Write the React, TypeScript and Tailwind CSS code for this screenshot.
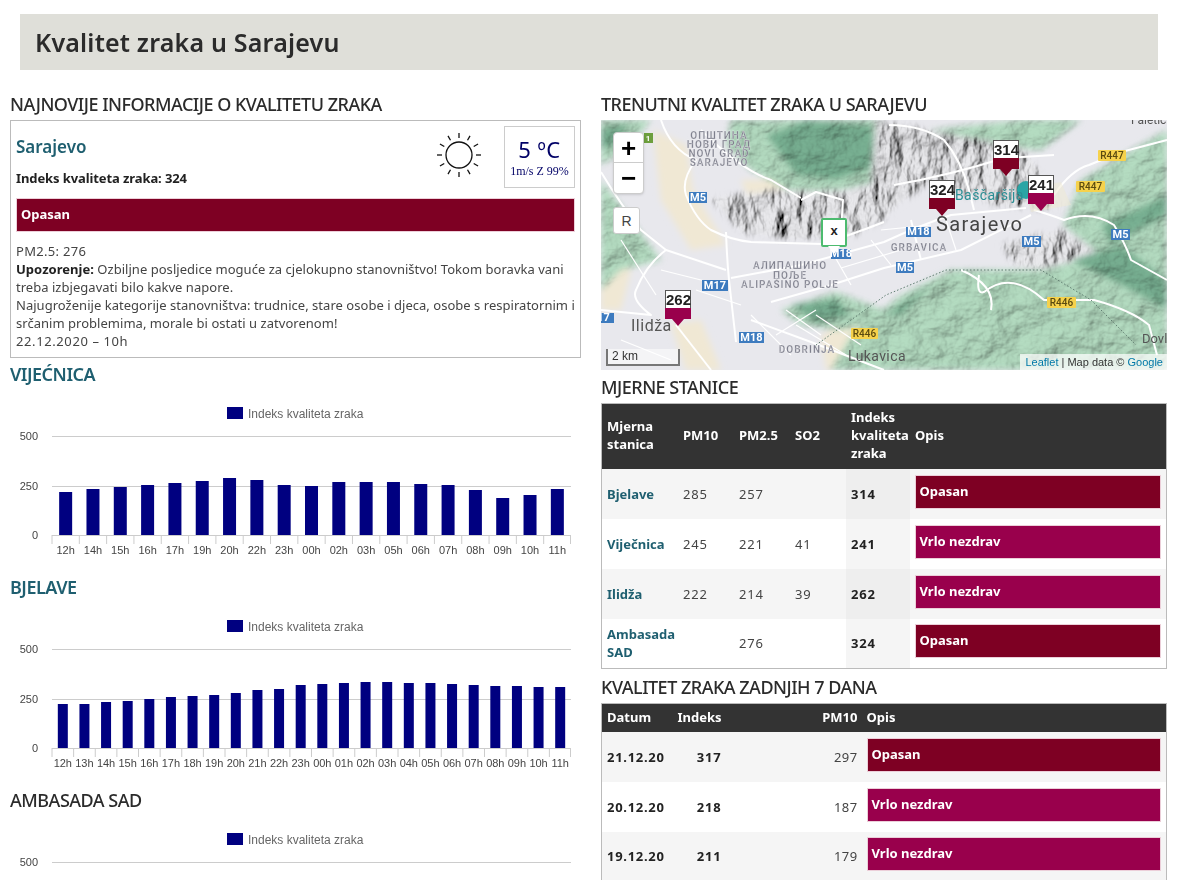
const hoursA = ['12h', '14h', '15h', '16h', '17h', '19h', '20h', '22h', '23h', '00h', '02h', '03h', '05h', '06h', '07h', '08h', '09h', '10h', '11h'];
const barsA = [43, 46, 48, 50, 52, 54, 57, 55, 50, 49, 53, 53, 53, 51, 50, 45, 37, 40, 46];
const hoursB = ['12h', '13h', '14h', '15h', '16h', '17h', '18h', '19h', '20h', '21h', '22h', '23h', '00h', '01h', '02h', '03h', '04h', '05h', '06h', '07h', '08h', '09h', '10h', '11h'];
const barsB = [44, 44, 46, 47, 49, 51, 52, 53, 55, 58, 59, 63, 64, 65, 66, 66, 65, 65, 64, 63, 62, 62, 61, 61];

const DARK = 'bg-[#7e0023]';
const PURPLE = 'bg-[#99004c]';

const Chart = ({ hours = [], bars = [] }: { hours?: string[]; bars?: number[] }) => {
  const left = 42;
  const right = 561;
  const step = hours.length ? (right - left) / hours.length : 0;
  const barW = hours.length > 20 ? 10 : 13;
  return (
    <svg width="571" height="183" viewBox="0 0 571 183" className="block font-['Liberation_Sans',sans-serif]">
      <rect x="217" y="17" width="16" height="12" fill="#000080" />
      <text x="238" y="28" fontSize="12" fill="#666">Indeks kvaliteta zraka</text>
      {[46, 96].map((y) => (
        <line key={y} x1={left} x2={right} y1={y + 0.5} y2={y + 0.5} stroke="#ccc" />
      ))}
      {[['500', 46], ['250', 96], ['0', 145]].map(([label, y]) => (
        <text key={label} x="28" y={Number(y) + 4} fontSize="11" fill="#444" textAnchor="end">{label}</text>
      ))}
      {bars.map((h, i) => (
        <rect key={i} x={left + step * (i + 0.5) - barW / 2} y={145 - h} width={barW} height={h} fill="#000080" />
      ))}
      {hours.length > 0 && <line x1={left} x2={right} y1="145.5" y2="145.5" stroke="#ccc" />}
      {hours.map((label, i) => (
        <g key={i}>
          <line x1={left + step * i} x2={left + step * i} y1="145" y2="154" stroke="#ccc" />
          <text x={left + step * (i + 0.5)} y="164" fontSize="11" fill="#444" textAnchor="middle">{label}</text>
        </g>
      ))}
      {hours.length > 0 && <line x1={right - 0.5} x2={right - 0.5} y1="145" y2="154" stroke="#ccc" />}
    </svg>
  );
};

const Sun = () => (
  <svg width="44" height="44" viewBox="0 0 44 44" fill="none" stroke="#111" strokeWidth="1.3">
    <circle cx="22" cy="22" r="13" />
    {[0, 30, 60, 90, 120, 150, 180, 210, 240, 270, 300, 330].map((a) => (
      <line key={a} x1="22" y1="0" x2="22" y2="5" transform={`rotate(${a} 22 22)`} />
    ))}
  </svg>
);

const hills = [
  'M130,0 L283,0 L283,60 L240,70 L190,72 L150,50 L125,25 Z',
  'M0,60 L30,100 L60,140 L20,150 L0,170 Z',
  'M0,0 L50,0 L30,25 L0,45 Z',
  'M180,190 L235,172 L283,190 L300,198 L240,210 L200,205 Z',
  'M566,10 L480,60 L462,105 L500,135 L440,150 L350,150 L300,175 L250,215 L230,250 L566,250 Z',
  'M283,20 L330,10 L420,0 L480,0 L440,30 L380,25 L330,35 Z',
];
const deepGreen = [
  'M165,15 L205,0 L270,5 L280,45 L235,60 L195,55 Z',
  'M190,185 L235,178 L250,195 L215,203 Z',
  'M500,105 L566,75 L566,95 L510,125 Z',
  'M470,140 L520,125 L566,160 L566,190 L520,165 Z',
  'M283,195 L330,165 L300,195 Z',
  'M0,8 L28,4 L14,25 L0,30 Z',
];
const rocks = [
  'M110,78 L180,70 L250,72 L283,62 L290,95 L250,116 L190,118 L140,112 Z',
  'M275,0 L420,28 L445,60 L460,90 L395,85 L330,62 L285,92 L270,60 Z',
  'M400,125 L460,110 L490,130 L440,150 L415,145 Z',
];
const tan = [
  'M52,10 L85,25 L92,70 L125,125 L90,130 L60,80 Z',
  'M140,60 L170,60 L200,80 L150,85 Z',
  'M70,205 L100,200 L120,250 L85,250 Z',
  'M220,215 L260,195 L290,235 L250,250 L225,250 Z',
  'M0,130 L30,150 L20,190 L0,190 Z',
];
const roads = [
  'M60,0 Q70,30 95,40 Q80,60 85,75 Q95,100 110,110 Q130,120 150,122 L220,124 Q250,115 283,102',
  'M125,112 Q126,140 128,160 L135,222',
  'M130,158 L200,145 L283,122 Q320,105 350,95 L425,88',
  'M170,182 L230,165 L283,148 L360,130 L430,95',
  'M0,190 L50,195 Q30,180 35,170 Q45,145 65,130 L125,150',
  'M0,52 Q20,85 40,110 L65,130',
  'M75,205 L110,250',
  'M150,200 L210,222 L283,250',
  'M433,90 Q450,95 463,100 Q490,90 513,105 Q525,125 530,140 L566,160',
  'M453,75 Q470,50 488,45 L520,32 L566,20',
  'M378,155 Q375,175 383,172 Q410,150 443,180 L493,180 Q530,190 548,205 L556,235',
  'M288,5 Q320,5 343,20 Q360,40 368,70 L373,90',
  'M293,65 Q350,55 403,38 L453,35',
  'M200,80 L215,72 L242,80 L240,110',
  'M100,10 Q140,50 170,60 L200,78',
  'M310,100 L320,140',
  'M360,150 Q395,165 390,190',
];
const streets = [
  'M230,130 L250,165 M270,120 L290,145 M185,190 L220,215 M150,195 L190,235 M175,215 L215,190',
  'M195,205 L245,235 M215,195 L260,225 M240,148 L300,130 M60,150 L120,165 M95,170 L140,185',
  'M20,120 L55,175 M280,110 L330,105 M20,220 L70,240 M345,100 L355,130',
];
const blueShields = [
  ['M5', 88, 72, 18, 11], ['M17', 101, 160, 26, 11], ['17', -8, 193, 21, 10], ['M18', 138, 212, 25, 11],
  ['M18', 230, 129, 20, 10], ['M18', 305, 107, 25, 10], ['M5', 295, 142, 18, 11], ['M5', 421, 116, 19, 11], ['M5', 510, 109, 19, 11],
] as const;
const yellowShields = [
  ['R447', 497, 30, 28, 11], ['R447', 475, 61, 29, 11], ['R446', 446, 177, 29, 11], ['R446', 250, 208, 27, 11],
] as const;
const grayLabels = [
  ['ОПШТИНА', 118, 19], ['НОВИ ГРАД', 118, 28], ['NOVI GRAD', 118, 37], ['SARAJEVO', 118, 46],
  ['АЛИПАШИНО', 189, 149], ['ПОЉЕ', 189, 159], ['ALIPAŠINO POLJE', 189, 168], ['GRBAVICA', 318, 131], ['DOBRINJA', 206, 233],
] as const;

const MapArt = () => (
  <svg width="566" height="250" viewBox="0 0 566 250" className="block font-['Roboto',sans-serif]">
    <defs>
      <filter id="soft"><feGaussianBlur stdDeviation="3" /></filter>
      <filter id="crisp"><feGaussianBlur stdDeviation="0.35" /></filter>
      <filter id="relief" x="0" y="0" width="100%" height="100%">
        <feTurbulence type="fractalNoise" baseFrequency="0.03 0.04" numOctaves="5" seed="7" />
        <feDiffuseLighting surfaceScale="6" lightingColor="#ffffff">
          <feDistantLight azimuth="220" elevation="62" />
        </feDiffuseLighting>
      </filter>
      <filter id="ridges" x="0" y="0" width="100%" height="100%">
        <feTurbulence type="fractalNoise" baseFrequency="0.05 0.025" numOctaves="5" seed="11" />
        <feDiffuseLighting surfaceScale="11" lightingColor="#ffffff">
          <feDistantLight azimuth="200" elevation="55" />
        </feDiffuseLighting>
      </filter>
      <mask id="terrain">
        <g fill="#fff" filter="url(#soft)">
          {hills.map((d, i) => <path key={i} d={d} />)}
        </g>
      </mask>
      <mask id="rocky">
        <g fill="#fff" filter="url(#soft)">
          {rocks.map((d, i) => <path key={i} d={d} />)}
        </g>
      </mask>
    </defs>
    <rect width="566" height="250" fill="#e8e8ed" />
    <g filter="url(#soft)">
      {tan.map((d, i) => <path key={i} d={d} fill="#f0e8d4" />)}
      {hills.map((d, i) => <path key={i} d={d} fill="#b4dcc1" />)}
      {deepGreen.map((d, i) => <path key={i} d={d} fill="#78b092" />)}
      {rocks.map((d, i) => <path key={i} d={d} fill="#e9e9ec" />)}
    </g>
    <rect width="566" height="250" filter="url(#relief)" mask="url(#terrain)" className="mix-blend-multiply" />
    <rect width="566" height="250" filter="url(#ridges)" mask="url(#rocky)" className="mix-blend-multiply" />
    <g filter="url(#crisp)" fill="none" stroke="#fff" strokeLinejoin="round">
      <g strokeWidth="2">{roads.map((d, i) => <path key={i} d={d} />)}</g>
      <g strokeWidth="1.2">{streets.map((d, i) => <path key={i} d={d} />)}</g>
    </g>
    <path d="M425,68 L460,62 L470,85 L430,92 Z" fill="#efe9d2" opacity="0.5" />
    <path d="M215,225 L285,175 L345,150 L440,150 L490,180 L535,225" fill="none" stroke="#5f7d70" strokeWidth="1" strokeDasharray="1.5 2" />
    <rect x="43" y="13" width="9" height="10" fill="#6d9f3d" />
    <text x="47" y="21" fontSize="8" fontWeight="700" fill="#fff" textAnchor="middle">1</text>
    {blueShields.map(([t, x, y, w, h], i) => (
      <g key={i}>
        <rect x={x} y={y} width={w} height={h} fill="#3d7bbf" />
        <text x={x + w / 2} y={y + h - 2} fontSize="11" fontWeight="700" fill="#fff" textAnchor="middle">{t}</text>
      </g>
    ))}
    {yellowShields.map(([t, x, y, w, h], i) => (
      <g key={i}>
        <rect x={x} y={y} width={w} height={h} rx="1" fill="#f6d24c" />
        <text x={x + w / 2} y={y + h - 2} fontSize="10" fontWeight="500" fill="#5a4a10" textAnchor="middle">{t}</text>
      </g>
    ))}
    {grayLabels.map(([t, x, y], i) => (
      <text key={i} x={x} y={y} fontSize="10" fontWeight="700" letterSpacing="1" fill="#7d7e8c" stroke="#fff" strokeOpacity="0.5" strokeWidth="0.4" textAnchor="middle">{t}</text>
    ))}
    <circle cx="425" cy="70" r="9" fill="#2aa5a5" />
    <text x="354" y="80" fontSize="14" letterSpacing="0.4" fill="#2b8f95">Baščaršija</text>
    <text x="335" y="111" fontSize="20" letterSpacing="1.4" fill="#444">Sarajevo</text>
    <text x="30" y="211" fontSize="16" letterSpacing="0.5" fill="#555">Ilidža</text>
    <text x="247" y="241" fontSize="14" letterSpacing="0.4" fill="#555">Lukavica</text>
    <text x="541" y="223" fontSize="13" fill="#555">Dovl</text>
    <text x="530" y="4" fontSize="12" fill="#555">Faletići</text>
  </svg>
);

const markers = [
  { value: '314', pos: 'left-[392px] top-[20px]', color: DARK, tip: 'border-t-[#7e0023]' },
  { value: '324', pos: 'left-[328px] top-[60px]', color: DARK, tip: 'border-t-[#7e0023]' },
  { value: '241', pos: 'left-[427px] top-[55px]', color: PURPLE, tip: 'border-t-[#99004c]' },
  { value: '262', pos: 'left-[64px] top-[170px]', color: PURPLE, tip: 'border-t-[#99004c]' },
];

const Marker = ({ value, pos, color, tip }: { value: string; pos: string; color: string; tip: string }) => (
  <div className={`absolute w-[26px] ${pos}`}>
    <div className="h-[18px] bg-white border-t border-x border-[#555] text-center text-[15px] leading-[18px] font-bold text-[#222] font-['Liberation_Sans',sans-serif]">{value}</div>
    <div className={`h-[11px] ${color}`} />
    <div className={`mx-auto w-0 h-0 border-x-[6px] border-x-transparent border-t-[7px] ${tip}`} />
  </div>
);

const SarajevoMap = () => (
  <div className="relative w-[566px] h-[250px] overflow-hidden">
    <MapArt />
    <div className="absolute left-[12px] top-[12px] w-[31px] bg-white rounded-[4px] border border-[#ccc] shadow-sm text-black font-['Liberation_Sans',sans-serif]">
      <div className="h-[30px] flex items-center justify-center text-[26px] font-bold leading-none border-b border-[#ccc]">+</div>
      <div className="h-[30px] flex items-center justify-center text-[26px] font-bold leading-none">−</div>
    </div>
    <div className="absolute left-[12px] top-[87px] w-[27px] h-[27px] bg-white rounded-[3px] border border-[#ccc] flex items-center justify-center text-[14px] text-[#444] font-['Liberation_Sans',sans-serif]">R</div>
    {markers.map((m) => <Marker key={m.value} {...m} />)}
    <div className="absolute left-[220px] top-[98px] w-[26px]">
      <div className="h-[29px] bg-white border-2 border-[#4dbb6f] rounded-[2px] text-center text-[13px] leading-[22px] font-bold text-[#222] font-['Liberation_Sans',sans-serif]">x</div>
      <div className="mx-auto -mt-[1px] w-0 h-0 border-x-[6px] border-x-transparent border-t-[8px] border-t-white" />
    </div>
    <div className="absolute left-[5px] bottom-[4px] w-[74px] h-[17px] border-2 border-t-0 border-[#777] bg-white/50 pl-[4px] text-[12px] leading-[15px] text-[#333] font-['Liberation_Sans',sans-serif]">2 km</div>
    <div className="absolute right-0 bottom-0 h-[16px] pl-[5px] pr-[4px] bg-white/70 text-[11px] leading-[16px] text-[#333] font-['Liberation_Sans',sans-serif]">
      <span className="text-[#0078a8]">Leaflet</span> | Map data © <span className="text-[#0078a8]">Google</span>
    </div>
  </div>
);

const Status = ({ text, color }: { text: string; color: string }) => (
  <div className={`h-[34px] border border-[#eccfd9] ${color} pl-[4px] text-[13px] leading-[30px] font-bold text-white`}>{text}</div>
);

const Title = ({ children, teal = false }: { children: string; teal?: boolean }) => (
  <h2 className={`h-[30px] text-[18px] leading-[29px] tracking-[-0.5px] ${teal ? 'font-semibold text-[#1f5f70]' : 'font-medium text-[#2b2b2b]'}`}>{children}</h2>
);

const stations = [
  { name: 'Bjelave', pm10: '285', pm25: '257', so2: '', index: '314', text: 'Opasan', color: DARK },
  { name: 'Viječnica', pm10: '245', pm25: '221', so2: '41', index: '241', text: 'Vrlo nezdrav', color: PURPLE },
  { name: 'Ilidža', pm10: '222', pm25: '214', so2: '39', index: '262', text: 'Vrlo nezdrav', color: PURPLE },
  { name: 'Ambasada SAD', pm10: '', pm25: '276', so2: '', index: '324', text: 'Opasan', color: DARK },
];

const days = [
  { date: '21.12.20', index: '317', pm10: '297', text: 'Opasan', color: DARK },
  { date: '20.12.20', index: '218', pm10: '187', text: 'Vrlo nezdrav', color: PURPLE },
  { date: '19.12.20', index: '211', pm10: '179', text: 'Vrlo nezdrav', color: PURPLE },
];

export default function App() {
  return (
    <div className="w-[1179px] h-[880px] overflow-hidden bg-white text-[13px] leading-[18px] text-[#333] font-['Noto_Sans',sans-serif]">
      <header className="ml-[20px] mr-[21px] mt-[14px] h-[56px] bg-[#dfdfd9] flex items-center pl-[15px]">
        <h1 className="text-[25px] font-semibold tracking-[0.2px] text-[#2b2b2b]">Kvalitet zraka u Sarajevu</h1>
      </header>

      <div className="flex gap-[20px] pl-[10px] mt-[20px]">
        {/* lijeva kolona */}
        <div className="w-[571px] shrink-0">
          <Title>NAJNOVIJE INFORMACIJE O KVALITETU ZRAKA</Title>
          <div className="h-[238px] border border-[#bbb] px-[5px] pt-[5px]">
            <div className="flex h-[62px]">
              <div className="flex-1">
                <div className="mt-[9px] text-[17px] leading-[24px] font-semibold text-[#1f5f70]">Sarajevo</div>
                <div className="mt-[10px] text-[13px] leading-[18px] font-bold tracking-[-0.1px] text-[#222]">Indeks kvaliteta zraka: 324</div>
              </div>
              <div className="mt-[7px] mr-[23px]"><Sun /></div>
              <div className="w-[71px] border border-[#ccc] text-center text-[#000066]">
                <div className="mt-[10px] text-[22px] leading-[24px] tracking-[0.5px]">5 ºC</div>
                <div className="mt-[3px] text-[12px] leading-[14px] font-['Liberation_Serif',serif]">1m/s Z 99%</div>
              </div>
            </div>
            <div className="mt-[10px]"><Status text="Opasan" color={DARK} /></div>
            <p className="mt-[10px] whitespace-nowrap tracking-[0.03px] text-[#444]">
              <span className="tracking-[0.3px]">PM2.5: 276</span><br />
              <b className="text-[#222]">Upozorenje:</b> Ozbiljne posljedice moguće za cjelokupno stanovništvo! Tokom boravka vani<br />
              treba izbjegavati bilo kakve napore.<br />
              Najugroženije kategorije stanovništva: trudnice, stare osobe i djeca, osobe s respiratornim i<br />
              srčanim problemima, morale bi ostati u zatvorenom!<br />
              <span className="tracking-[0.6px]">22.12.2020 – 10h</span>
            </p>
          </div>
          <div className="mt-[2px]"><Title teal>VIJEĆNICA</Title></div>
          <Chart hours={hoursA} bars={barsA} />
          <Title teal>BJELAVE</Title>
          <Chart hours={hoursB} bars={barsB} />
          <Title>AMBASADA SAD</Title>
          <Chart />
        </div>

        {/* desna kolona */}
        <div className="w-[566px] shrink-0">
          <Title>TRENUTNI KVALITET ZRAKA U SARAJEVU</Title>
          <SarajevoMap />
          <div className="mt-[3px]"><Title>MJERNE STANICE</Title></div>
          <table className="w-full table-fixed border-collapse border border-[#bbb]">
            <colgroup>
              <col className="w-[76px]" /><col className="w-[56px]" /><col className="w-[56px]" /><col className="w-[56px]" /><col className="w-[64px]" /><col />
            </colgroup>
            <thead>
              <tr className="h-[65px] bg-[#333] text-white font-bold text-left">
                <th className="px-[5px] pb-[2px]">Mjerna stanica</th>
                <th className="px-[5.5px] pb-[2px]">PM10</th>
                <th className="px-[5.5px] pb-[2px]">PM2.5</th>
                <th className="px-[5.5px] pb-[2px]">SO2</th>
                <th className="px-[5.5px] pb-[2px]">Indeks kvaliteta zraka</th>
                <th className="px-[5.5px] pb-[2px]">Opis</th>
              </tr>
            </thead>
            <tbody>
              {stations.map((s, i) => (
                <tr key={s.name} className={`h-[50px] ${i % 2 === 0 ? 'bg-[#f5f5f5]' : 'bg-white'}`}>
                  <td className="pl-[5px] font-bold text-[#1f5f70]">{s.name}</td>
                  <td className="px-[5.5px] tracking-[0.8px] text-[#444]">{s.pm10}</td>
                  <td className="px-[5.5px] tracking-[0.8px] text-[#444]">{s.pm25}</td>
                  <td className="px-[5.5px] tracking-[0.8px] text-[#444]">{s.so2}</td>
                  <td className={`px-[5.5px] tracking-[0.8px] font-bold text-[#222] ${i % 2 === 0 ? 'bg-[#eeeeee]' : 'bg-[#f5f5f5]'}`}>{s.index}</td>
                  <td className="px-[5px]"><div className="mb-[4px]"><Status text={s.text} color={s.color} /></div></td>
                </tr>
              ))}
            </tbody>
          </table>
          <div className="mt-[4px]"><Title>KVALITET ZRAKA ZADNJIH 7 DANA</Title></div>
          <table className="w-full table-fixed border-collapse border border-[#bbb]">
            <colgroup>
              <col className="w-[73px]" /><col className="w-[53px]" /><col className="w-[134px]" /><col />
            </colgroup>
            <thead>
              <tr className="h-[28px] bg-[#333] text-white font-bold">
                <th className="pl-[5px] pb-[2px] text-left">Datum</th>
                <th className="pr-[6px] pb-[2px] text-right">Indeks</th>
                <th className="pr-[4px] pb-[2px] text-right">PM10</th>
                <th className="px-[5px] pb-[2px] text-left">Opis</th>
              </tr>
            </thead>
            <tbody>
              {days.map((d, i) => (
                <tr key={d.date} className={`h-[50px] ${i % 2 === 0 ? 'bg-[#f5f5f5]' : 'bg-white'}`}>
                  <td className="pl-[5px] tracking-[0.7px] font-bold text-[#222]">{d.date}</td>
                  <td className="pr-[6px] text-right tracking-[0.8px] font-bold text-[#222]">{d.index}</td>
                  <td className="pr-[4px] text-right tracking-[0.4px] text-[#444]">{d.pm10}</td>
                  <td className="px-[5px]"><div className="mb-[4px]"><Status text={d.text} color={d.color} /></div></td>
                </tr>
              ))}
            </tbody>
          </table>
        </div>
      </div>
    </div>
  );
}
